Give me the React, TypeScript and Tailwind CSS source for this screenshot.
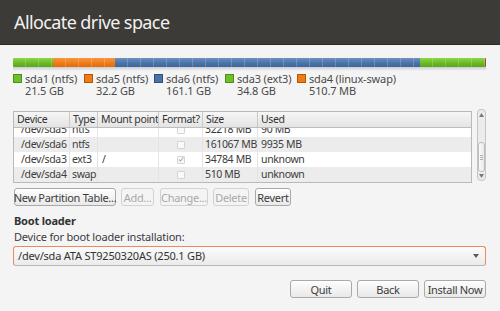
import { memo } from 'react';

interface Segment {
  width: number;
  color: string;
}

const SEGMENTS: Segment[] = [
  { width: 40, color: 'bg-[linear-gradient(#8ad648,#68b825_60%,#5aa61c)]' },
  { width: 62, color: 'bg-[linear-gradient(#f6963e,#ee7a16_60%,#e06c0c)]' },
  { width: 305, color: 'bg-[linear-gradient(#6c8fc0,#4a72a8_60%,#3f6599)]' },
  { width: 65, color: 'bg-[linear-gradient(#8ad648,#68b825_60%,#5aa61c)]' },
  { width: 1, color: 'bg-[#c0392b]' },
];

const LEGEND = [
  { name: 'sda1 (ntfs)', size: '21.5 GB', box: 'bg-[#6cc12a] border-[#4d8f1a]', w: 'w-[71px]' },
  { name: 'sda5 (ntfs)', size: '32.2 GB', box: 'bg-[#f07a14] border-[#b25608]', w: 'w-[70px]' },
  { name: 'sda6 (ntfs)', size: '161.1 GB', box: 'bg-[#4a72a8] border-[#2f4f7c]', w: 'w-[71px]' },
  { name: 'sda3 (ext3)', size: '34.8 GB', box: 'bg-[#6cc12a] border-[#4d8f1a]', w: 'w-[72px]' },
  { name: 'sda4 (linux-swap)', size: '510.7 MB', box: 'bg-[#f07a14] border-[#b25608]', w: 'w-[120px]' },
];

interface Row {
  device: string;
  type: string;
  mount: string;
  format: boolean;
  size: string;
  used: string;
}

const ROWS: Row[] = [
  { device: '/dev/sda5', type: 'ntfs', mount: '', format: false, size: '32218 MB', used: '90 MB' },
  { device: '/dev/sda6', type: 'ntfs', mount: '', format: false, size: '161067 MB', used: '9935 MB' },
  { device: '/dev/sda3', type: 'ext3', mount: '/', format: true, size: '34784 MB', used: 'unknown' },
  { device: '/dev/sda4', type: 'swap', mount: '', format: false, size: '510 MB', used: 'unknown' },
];

const COLS = ['w-[56px]', 'w-[28px]', 'w-[61px]', 'w-[44px]', 'w-[55px]', 'flex-1'];

const Button = memo(function Button({
  label,
  disabled,
  className = '',
}: {
  label: string;
  disabled?: boolean;
  className?: string;
}) {
  return (
    <div
      className={`h-[18px] flex items-center justify-center rounded-[3px] border leading-none whitespace-nowrap tracking-[-0.3px] ${
        disabled
          ? 'border-[#d2d2d2] text-[#a9a9a9] bg-[#f4f4f4]'
          : 'border-[#a9a9a9] text-[#3c3c3c] bg-[linear-gradient(#fdfdfd,#e9e9e9)] shadow-[inset_0_1px_0_#fff]'
      } ${className}`}
    >
      {label}
    </div>
  );
});

function Checkbox({ checked }: { checked: boolean }) {
  return (
    <div className="w-[8px] h-[8px] rounded-[1px] border border-[#d4d4d4] bg-[#fafafa] flex items-center justify-center">
      {checked && (
        <svg width="7" height="7" viewBox="0 0 7 7">
          <path d="M1 3.5 L3 5.5 L6.2 1" stroke="#b5b5b5" strokeWidth="1.3" fill="none" />
        </svg>
      )}
    </div>
  );
}

export default function App() {
  return (
    <div className="w-[500px] h-[311px] bg-[#f4f4f4] text-[11px] text-[#3c3c3c] font-['Noto_Sans','DejaVu_Sans',sans-serif] overflow-hidden whitespace-nowrap">
      <div className="h-[45px] bg-[#3c3b37] border-b border-[#2c2b28] pl-[14px] pt-[9px] text-[18px] text-[#f2f1f0] tracking-[-0.6px]">
        Allocate drive space
      </div>

      <div className="pl-[13px] pr-[14px]">
        {/* partition bar */}
        <div className="mt-[13px] flex h-[9px] rounded-[1px] overflow-hidden">
          {SEGMENTS.map((s, i) => (
            <div key={i} className={`${s.color} h-full`} style={{ width: s.width }}>
              <div className="h-full w-full bg-[repeating-linear-gradient(90deg,transparent_0,transparent_12px,rgba(255,255,255,0.18)_12px,rgba(255,255,255,0.18)_13px)]" />
            </div>
          ))}
        </div>
        <div className="h-[4px] bg-[linear-gradient(rgba(120,130,150,0.35),rgba(240,240,240,0))]" />

        {/* legend */}
        <div className="flex mt-[2px] leading-[12px] tracking-[-0.15px]">
          {LEGEND.map(l => (
            <div key={l.name} className={`${l.w} flex gap-[3px]`}>
              <div className={`w-[9px] h-[9px] border mt-[1px] ${l.box}`} />
              <div className="text-[#4a4a4a]">
                <div>{l.name}</div>
                <div>{l.size}</div>
              </div>
            </div>
          ))}
        </div>

        {/* table */}
        <div className="mt-[14px] flex gap-[5px] text-[10.5px] tracking-[-0.35px]">
          <div className="w-[459px] h-[72px] border border-[#b9b9b9] bg-white">
            <div className="flex h-[16px] bg-[linear-gradient(#f6f6f6,#e4e4e4)] border-b border-[#bdbdbd] leading-[15px] text-[#333]">
              {['Device', 'Type', 'Mount point', 'Format?', 'Size', 'Used'].map((h, i) => (
                <div
                  key={h}
                  className={`${COLS[i]} shrink-0 overflow-hidden pl-[3px] ${i < 5 ? 'border-r border-[#c9c9c9]' : ''}`}
                >
                  {h}
                </div>
              ))}
            </div>
            <div className="h-[54px] overflow-hidden">
              <div className="-mt-[6px]">
                {ROWS.map((r, idx) => (
                  <div
                    key={r.device}
                    className={`flex h-[15px] leading-[15px] ${idx % 2 === 1 ? 'bg-[#ececec]' : 'bg-white'}`}
                  >
                    <div className={`${COLS[0]} shrink-0 overflow-hidden pl-[7px] border-r border-[#e4e4e4]`}>{r.device}</div>
                    <div className={`${COLS[1]} shrink-0 overflow-hidden pl-[2px] border-r border-[#e4e4e4]`}>{r.type}</div>
                    <div className={`${COLS[2]} shrink-0 overflow-hidden pl-[4px] border-r border-[#e4e4e4]`}>{r.mount}</div>
                    <div className={`${COLS[3]} shrink-0 flex items-center justify-center border-r border-[#e4e4e4]`}>
                      <Checkbox checked={r.format} />
                    </div>
                    <div className={`${COLS[4]} shrink-0 overflow-hidden pl-[2px] border-r border-[#e4e4e4]`}>{r.size}</div>
                    <div className={`${COLS[5]} pl-[3px]`}>{r.used}</div>
                  </div>
                ))}
              </div>
            </div>
          </div>

          {/* scrollbar */}
          <div className="w-[9px] h-[72px] -mt-[2px] rounded-[4px] border border-[#c4c4c4] bg-[#ececec] flex flex-col items-center py-[2px]">
            <svg width="5" height="4" viewBox="0 0 5 4" className="mt-[1px]">
              <path d="M0 4 L2.5 0 L5 4 Z" fill="#7a7a7a" />
            </svg>
            <div className="flex-1" />
            <div className="w-[7px] h-[30px] rounded-[3px] border border-[#bdbdbd] bg-[linear-gradient(90deg,#fafafa,#e8e8e8)] flex flex-col items-center justify-center gap-[1px]">
              <div className="w-[3px] h-[1px] bg-[#b0b0b0]" />
              <div className="w-[3px] h-[1px] bg-[#b0b0b0]" />
              <div className="w-[3px] h-[1px] bg-[#b0b0b0]" />
            </div>
            <svg width="5" height="4" viewBox="0 0 5 4" className="mt-[2px]">
              <path d="M0 0 L2.5 4 L5 0 Z" fill="#7a7a7a" />
            </svg>
          </div>
        </div>

        {/* partition buttons */}
        <div className="mt-[5px] flex ml-[1px]">
          <Button label="New Partition Table..." className="w-[102px]" />
          <Button label="Add..." disabled className="w-[33px] ml-[5px]" />
          <Button label="Change..." disabled className="w-[48px] ml-[6px]" />
          <Button label="Delete" disabled className="w-[36px] ml-[5px]" />
          <Button label="Revert" className="w-[36px] ml-[6px]" />
        </div>

        <div className="mt-[8px] font-bold text-[#333] leading-[13px] ml-[1px] tracking-[-0.2px]">Boot loader</div>
        <div className="mt-[3px] leading-[13px] ml-[1px] tracking-[-0.2px]">Device for boot loader installation:</div>

        {/* combo */}
        <div className="mt-[3px] h-[20px] rounded-[3px] border border-[#e98b5f] border-b-[#b8b8b8] bg-[linear-gradient(#fbfbfb,#ebebeb)] flex items-center pl-[4px] pr-[6px] tracking-[-0.2px]">
          <div className="flex-1 text-[#333]">/dev/sda ATA ST9250320AS (250.1 GB)</div>
          <svg width="6" height="4" viewBox="0 0 6 4">
            <path d="M0 0 L3 4 L6 0 Z" fill="#5a5a5a" />
          </svg>
        </div>

        {/* navigation */}
        <div className="mt-[14px] flex justify-end gap-[5px]">
          <Button label="Quit" className="w-[62px]" />
          <Button label="Back" className="w-[62px]" />
          <Button label="Install Now" className="w-[62px]" />
        </div>
      </div>
    </div>
  );
}
